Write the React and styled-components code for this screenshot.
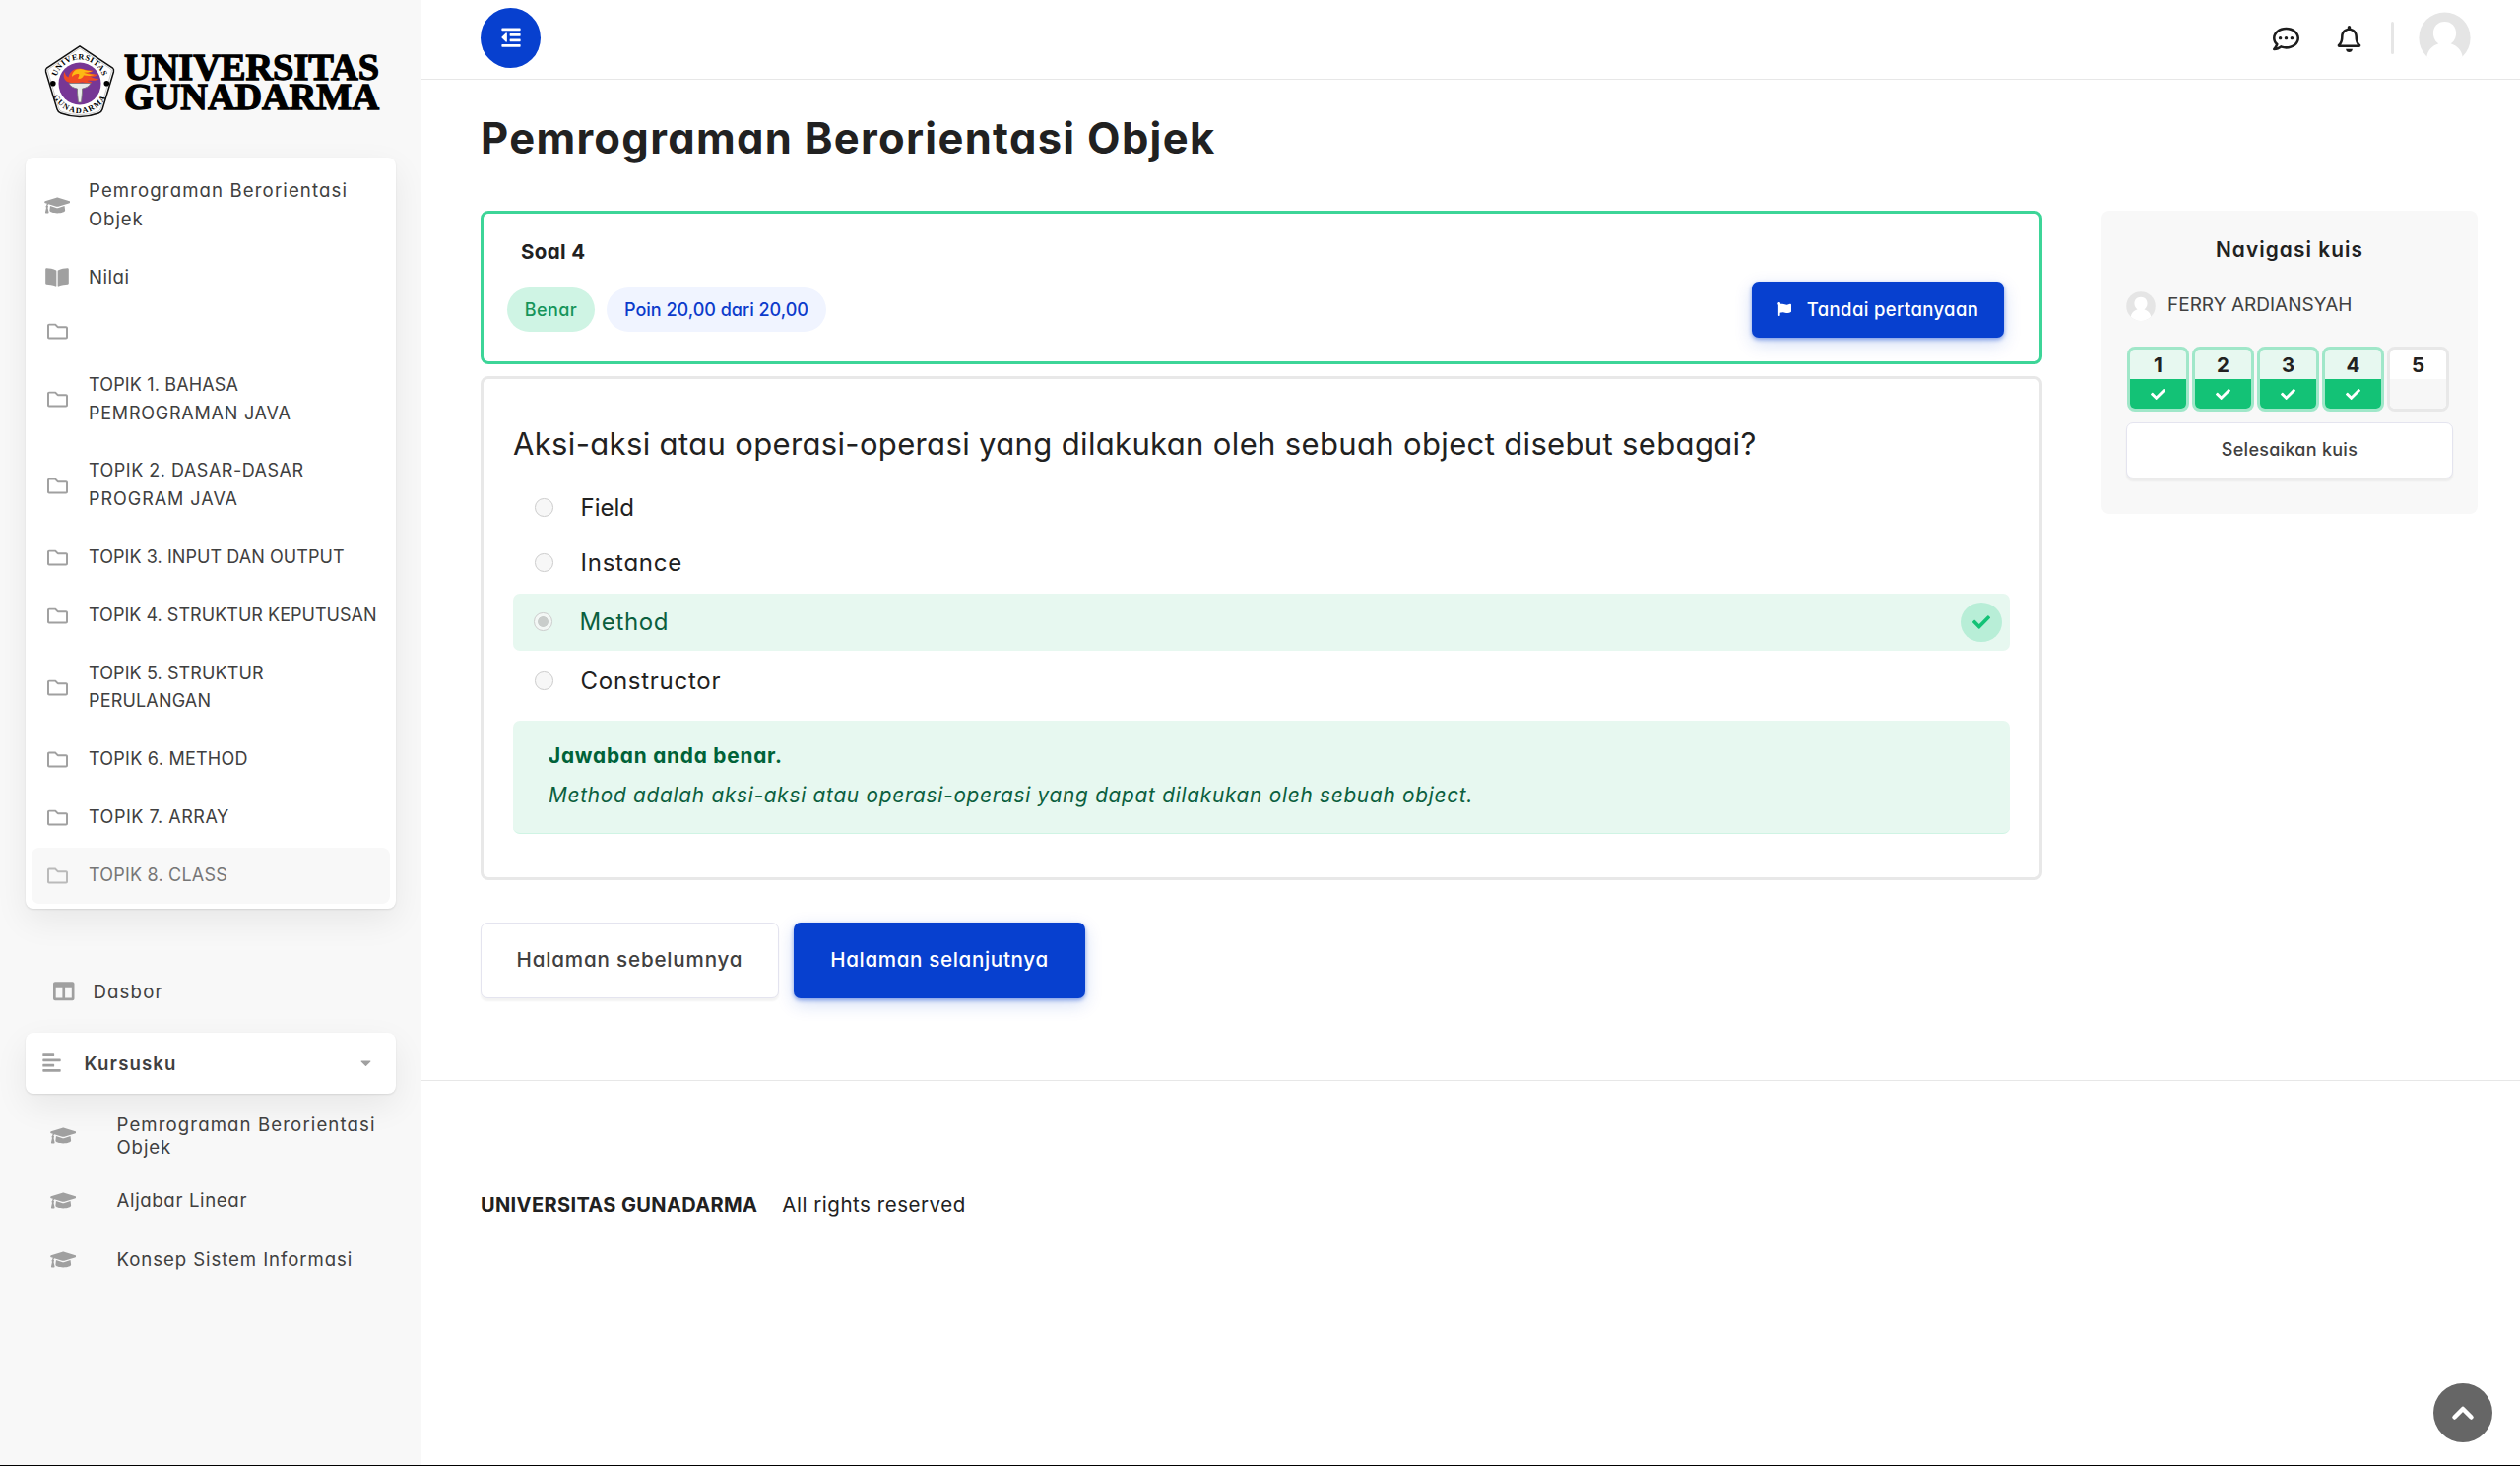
import React from "react";
import styled, { createGlobalStyle, css } from "styled-components";
import {
  FaGraduationCap, FaBookOpen, FaRegFolder, FaColumns, FaAlignLeft, FaCaretDown,
  FaOutdent, FaRegCommentDots, FaRegBell, FaFlag, FaCheck,
} from "react-icons/fa";

const Global = createGlobalStyle`
  * { box-sizing: border-box; }
  body {
    margin: 0;
    background: #fff;
    color: #212121;
    font-family: Inter, "Open Sans", sans-serif;
    font-feature-settings: "cv11";
  }
  svg { display: block; flex: none; }
`;

const floating = css`
  box-shadow: 0 1px 2px rgba(0, 0, 0, 0.1), 0 12px 34px rgba(0, 0, 0, 0.07);
`;

const Label = styled.span`
  white-space: nowrap;
  letter-spacing: ${p => p.$ls || 0}px;
`;

const Page = styled.div`
  display: flex;
  height: 1489px;
  border-bottom: 1px solid #000;
  overflow: hidden;
`;

/* Sidebar */
const Sidebar = styled.aside`
  width: 428px;
  flex: none;
  background: #f8f8f8;
  padding: 46px 26px 0;
`;
const LogoLink = styled.div`
  padding-left: 20px;
  height: 114px;
  svg { overflow: visible; }
`;
const MenuCard = styled.nav`
  background: #fff;
  border-radius: 8px;
  padding: 5.4px 6px;
  height: 763px;
  display: flex;
  flex-direction: column;
  gap: 2px;
  ${floating}
`;
const MenuItem = styled.div`
  display: flex;
  align-items: center;
  border-radius: 8px;
  padding: 14px 0;
  min-height: 48.6px;
  font-size: ${p => (p.$caps ? 18 : 18.6)}px;
  line-height: 28.8px;
  color: #404040;
  background: ${p => (p.$active ? "#f8f8f8" : "transparent")};
  > * { opacity: ${p => (p.$active ? 0.7 : 1)}; }
`;
const IconCell = styled.span`
  width: 52px;
  margin-right: ${p => p.$gap ?? 6}px;
  flex: none;
  display: flex;
  justify-content: center;
  color: #a0a0a0;
`;
const Lines = styled.span`
  display: flex;
  flex-direction: column;
  align-items: flex-start;
`;
const DashLink = styled.div`
  display: flex;
  align-items: center;
  gap: 19px;
  height: 50px;
  margin-top: 59px;
  padding-left: 28px;
  color: #404040;
  font-size: 18.6px;
  svg { color: #a0a0a0; }
`;
const Courses = styled.div`
  display: flex;
  align-items: center;
  gap: 23.5px;
  height: 62px;
  margin-top: 17px;
  padding: 0 22px 1px 17px;
  background: #fff;
  border-radius: 8px;
  font-weight: 600;
  font-size: 18.6px;
  color: #404040;
  ${floating}
  svg { color: #a0a0a0; }
  svg:last-child { margin-left: auto; }
`;
const SubList = styled.div`
  padding-top: 6.5px;
`;
const SubItem = styled.div`
  display: flex;
  align-items: center;
  height: ${p => (p.$tall ? 72 : 60)}px;
  padding-left: 12px;
  font-size: 18.6px;
  line-height: 22.8px;
  color: #404040;
`;

/* Main area */
const Main = styled.main`
  flex: 1;
  min-width: 0;
`;
const TopBar = styled.header`
  height: 81px;
  border-bottom: 1px solid #e7e7e7;
  display: flex;
  align-items: center;
  padding: 0 50px 4px 60px;
  color: #1d1d1d;
`;
const Toggle = styled.button`
  width: 61px;
  height: 61px;
  border: 0;
  border-radius: 50%;
  background: #0740cf;
  color: #fff;
  display: flex;
  align-items: center;
  justify-content: center;
  margin-right: auto;
`;
const Tools = styled.div`
  display: flex;
  align-items: center;
  gap: 37px;
  padding-top: 3px;
`;
const Divider = styled.i`
  width: 3px;
  height: 33px;
  border-radius: 2px;
  background: #e6e6e6;
  margin: 0 25px 0 29.5px;
`;
const Title = styled.h1`
  margin: 28px 0 42px 60px;
  font-size: 43.5px;
  line-height: 63px;
  font-weight: 700;
`;
const Content = styled.div`
  display: grid;
  grid-template-columns: 1586px 382px;
  column-gap: 60px;
  padding-left: 60px;
  align-items: start;
  height: 884px;
  border-bottom: 1px solid #e7e7e7;
`;
const InfoCard = styled.section`
  height: 156px;
  border: 3px solid #3dd598;
  border-radius: 8px;
  padding: 24px 36px 24px 24px;
`;
const QuestionNo = styled.h3`
  margin: 0 0 15.4px 14px;
  font-size: 20.5px;
  line-height: 30px;
  font-weight: 700;
`;
const InfoRow = styled.div`
  display: flex;
  align-items: center;
  gap: 12px;
  > button { margin-left: auto; }
`;
const Badge = styled.span`
  height: 45px;
  width: ${p => (p.$ok ? 89 : 223)}px;
  border-radius: 23px;
  display: flex;
  align-items: center;
  justify-content: center;
  font-size: 18px;
  font-weight: 500;
  background: ${p => (p.$ok ? "#cff4e4" : "#f0f4ff")};
  color: ${p => (p.$ok ? "#16945a" : "#0c3bcb")};
`;
const Button = styled.button`
  font-family: inherit;
  font-feature-settings: inherit;
  font-weight: 500;
  font-size: ${p => p.$fs}px;
  width: ${p => p.$w}px;
  height: ${p => p.$h}px;
  padding: 0 0 1.5px;
  border-radius: 7px;
  display: flex;
  align-items: center;
  justify-content: center;
  gap: 16px;
  ${p => p.$primary
    ? css`
        background: #0740cf;
        color: #fff;
        border: 0;
        box-shadow: 0 2px 4px rgba(7, 64, 207, 0.45), 0 6px 18px rgba(7, 64, 207, 0.18);
      `
    : css`
        background: #fff;
        color: #404040;
        border: 1px solid #e4e4ef;
        box-shadow: 0 3px 2px rgba(0, 0, 0, 0.05);
      `}
`;
const QuestionCard = styled.section`
  margin-top: 12px;
  height: 512px;
  border: 3px solid #e8e8e8;
  border-radius: 8px;
  padding: 42.5px 30px 0;
`;
const Question = styled.p`
  margin: 0 0 15px;
  font-size: 31px;
  line-height: 45px;
`;
const Option = styled.label`
  display: flex;
  align-items: center;
  gap: 28px;
  height: 56px;
  padding-left: 22px;
  font-size: 24px;
  ${p => p.$ok && css`
    height: 58px;
    margin: 3px 0;
    padding: 0 8px 0 21px;
    border-radius: 7px;
    background: #e7f8f0;
    color: #0b5f3e;
  `}
`;
const Radio = styled.i`
  width: 18.5px;
  height: 18.5px;
  border-radius: 50%;
  border: 1.5px solid #cdcdcd;
  background: ${p => (p.$on ? "radial-gradient(circle, #c9cdcb 0 5px, #f3f7f5 5.8px)" : "#f7f7f7")};
`;
const Mark = styled.span`
  margin-left: auto;
  width: 42px;
  height: 40px;
  border-radius: 50%;
  background: #b8eed7;
  color: #13c276;
  display: flex;
  align-items: center;
  justify-content: center;
`;
const Feedback = styled.div`
  margin-top: 12.5px;
  height: 115px;
  padding: 16.4px 36px;
  background: #e7f8f0;
  border-radius: 7px;
  border-bottom: 1.5px solid #cff4e4;
  color: #0b5f3e;
  font-size: 20.8px;
  line-height: 40px;
  strong { display: block; font-weight: 700; color: #006238; }
  em { display: block; }
`;
const Pager = styled.div`
  display: flex;
  gap: 15px;
  margin-top: 43px;
`;

/* Quiz navigation */
const Panel = styled.aside`
  height: 308px;
  background: #f8f8f8;
  border-radius: 8px;
  padding: 25px 25px 0;
`;
const PanelTitle = styled.h2`
  margin: 0;
  text-align: center;
  font-size: 20.8px;
  line-height: 30px;
  font-weight: 600;
`;
const User = styled.div`
  display: flex;
  align-items: center;
  gap: 12px;
  height: 30px;
  margin-top: 27px;
  font-size: 19px;
  color: #404040;
  span { padding-bottom: 3px; }
`;
const Cells = styled.div`
  display: flex;
  gap: 3px;
  padding-left: 1px;
  margin: 26px 0 11px;
`;
const Cell = styled.div`
  width: 63px;
  height: 66px;
  border-radius: 8px;
  border: 3px solid ${p => (p.$ok ? "#a0e7c9" : "#e8e8e8")};
  background: ${p => (p.$ok ? "#e7f8f0" : "#fff")};
  display: grid;
  grid-template-rows: 30px 30px;
  overflow: hidden;
  text-align: center;
  font-size: 20.5px;
  font-weight: 700;
  line-height: 32px;
`;
const CellState = styled.span`
  display: flex;
  align-items: center;
  justify-content: center;
  color: #fff;
  background: ${p => (p.$ok ? "#13c276" : "#f7f7f7")};
`;

const Footer = styled.footer`
  display: flex;
  gap: 25px;
  padding: 110.5px 0 0 60px;
  font-size: 20.5px;
  line-height: 30px;
  strong { font-weight: 700; font-size: 20px; }
`;
const ToTop = styled.button`
  position: absolute;
  left: 2471px;
  top: 1405px;
  width: 60px;
  height: 60px;
  border: 0;
  border-radius: 50%;
  background: #666;
  display: flex;
  align-items: center;
  justify-content: center;
  padding: 0;
`;

const Avatar = ({ size }) => (
  <svg width={size} height={size} viewBox="0 0 54 54">
    <circle cx="27" cy="27" r="26.6" fill="#e5e5e5" />
    <path d="M27 10.3c-7 0-11.8 5-11.8 11.8 0 4.8 2.3 8.8 5.6 10.8C14 35 9.5 40 8.500 46.500A26.600 26.600 0 0 0 27 54a26.600 26.600 0 0 0 18.500-7.500C44.500 40 40 35 33.200 32.900c3.300-2 5.600-6 5.600-10.800 0-6.800-4.800-11.800-11.800-11.800z" fill="#fff" />
  </svg>
);

const Logo = () => (
  <svg width="340" height="74" viewBox="0 0 340 74">
    <defs>
      <path id="arcTop" d="M10.5 39A24.500 24.500 0 0 1 59.500 39" />
      <path id="arcBottom" d="M5 39A30 30 0 0 0 65 39" />
    </defs>
    <path d="M35 .8 68.500 23Q70 24.200 69.400 27L58 65Q57.200 67.800 54 69 35 76 16 69 12.800 67.800 12 65L.6 27Q0 24.200 1.500 23Z" fill="#fff" stroke="#111" strokeWidth="1.500" />
    <path d="M35 3 66.500 24Q67.800 25 67.200 27L56.500 63.500Q55.700 66.500 53 67.500 35 73.500 17 67.500 14.300 66.500 13.500 63.500L2.800 27Q2.200 25 3.500 24Z" fill="none" stroke="#999" strokeWidth=".5" />
    <circle cx="35" cy="39" r="21.5" fill="#773795" />
    <circle cx="7.800" cy="38.800" r="2.800" />
    <circle cx="62.300" cy="38.800" r="2.800" />
    <g fontFamily="Liberation Serif, serif" fontWeight="700" fontSize="8.200" textAnchor="middle">
      <text letterSpacing=".6"><textPath href="#arcTop" startOffset="50%">UNIVERSITAS</textPath></text>
      <text letterSpacing="1.3"><textPath href="#arcBottom" startOffset="50%">GUNADARMA</textPath></text>
    </g>
    <path d="M19.500 27c1 3 2 5 4 5.500 1-5 5-9.500 12-9 4 .3 7 2.500 13 2-1 2-3 2-5 2 3 2 7 2 10 2-2 2.500-5 2.500-8 2 3 2 6 2.500 9 2.500-4 3-8 1-12 2 2 .6 4 .8 5 2-4 1.500-7-.5-10-.5-5 .8-13 1.500-16-1-3-2.500-3.500-6-2-9.500z" fill="#f04a23" />
    <path d="M27 32c0-5 4-8.500 9-8 4 .4 6 2.500 11 2-2 2-6 1.300-8 1.800 3 1.200 7 2.200 11 2-4 2-8 .6-11 .8-1 3-4 4-6 3 1-2 2-3 1-4.500-3-.6-5 .9-7 2.900z" fill="#fdb813" />
    <path d="M24 38.500h22c-1 3-5 5-8.500 5.500v4l-1 10h-3l-1-10v-4c-3.500-.5-7.500-2.500-8.500-5.500z" fill="#e9e9e9" stroke="#777" strokeWidth=".8" />
    <g fontFamily="Liberation Serif, serif" fontWeight="700" fontSize="38.500" stroke="#000" strokeWidth="1.300">
      <text x="80" y="34.500" textLength="259" lengthAdjust="spacingAndGlyphs">UNIVERSITAS</text>
      <text x="80" y="64.500" textLength="259" lengthAdjust="spacingAndGlyphs">GUNADARMA</text>
    </g>
  </svg>
);

const cap = <FaGraduationCap style={{ width: 26.5, height: 21 }} />;
const folder = <FaRegFolder size={21} />;

const menu = [
  { icon: cap, lines: [["Pemrograman Berorientasi", 1.12], ["Objek", 0.9]] },
  { icon: <FaBookOpen style={{ width: 24, height: 21 }} />, lines: [["Nilai", 0.5]] },
  { icon: folder, lines: [] },
  { icon: folder, caps: true, lines: [["TOPIK 1. BAHASA", 0.15], ["PEMROGRAMAN JAVA", 0.77]] },
  { icon: folder, caps: true, lines: [["TOPIK 2. DASAR-DASAR", 0.5], ["PROGRAM JAVA", 0.97]] },
  { icon: folder, caps: true, lines: [["TOPIK 3. INPUT DAN OUTPUT", 0.07]] },
  { icon: folder, caps: true, lines: [["TOPIK 4. STRUKTUR KEPUTUSAN", 0.03]] },
  { icon: folder, caps: true, lines: [["TOPIK 5. STRUKTUR", 0.1], ["PERULANGAN", 0.17]] },
  { icon: folder, caps: true, lines: [["TOPIK 6. METHOD", 0.25]] },
  { icon: folder, caps: true, lines: [["TOPIK 7. ARRAY", 0.53]] },
  { icon: folder, caps: true, active: true, lines: [["TOPIK 8. CLASS", 0.2]] },
];

const courses = [
  { tall: true, lines: [["Pemrograman Berorientasi", 1.12], ["Objek", 0.9]] },
  { lines: [["Aljabar Linear", 0.65]] },
  { lines: [["Konsep Sistem Informasi", 0.93]] },
];

const TextLines = ({ lines }) => (
  <Lines>{lines.map(([text, ls]) => <Label key={text} $ls={ls}>{text}</Label>)}</Lines>
);

export default function App() {
  return (
    <Page>
      <Global />
      <Sidebar>
        <LogoLink><Logo /></LogoLink>
        <MenuCard>
          {menu.map((item, i) => (
            <MenuItem key={i} $caps={item.caps} $active={item.active}>
              <IconCell>{item.icon}</IconCell>
              <TextLines lines={item.lines} />
            </MenuItem>
          ))}
        </MenuCard>
        <DashLink><FaColumns size={21.5} /><Label $ls={1.16}>Dasbor</Label></DashLink>
        <Courses>
          <FaAlignLeft style={{ width: 19, height: 21 }} />
          <Label $ls={1.14}>Kursusku</Label>
          <FaCaretDown size={17} />
        </Courses>
        <SubList>
          {courses.map(course => (
            <SubItem key={course.lines[0][0]} $tall={course.tall}>
              <IconCell $gap={28.5}>{cap}</IconCell>
              <TextLines lines={course.lines} />
            </SubItem>
          ))}
        </SubList>
      </Sidebar>

      <Main>
        <TopBar>
          <Toggle><FaOutdent size={22} /></Toggle>
          <Tools>
            <FaRegCommentDots size={27} />
            <FaRegBell size={27} />
          </Tools>
          <Divider />
          <Avatar size={53} />
        </TopBar>
        <Title><Label $ls={1.32}>Pemrograman Berorientasi Objek</Label></Title>
        <Content>
          <div>
            <InfoCard>
              <QuestionNo><Label $ls={0.36}>Soal 4</Label></QuestionNo>
              <InfoRow>
                <Badge $ok><Label $ls={0.4}>Benar</Label></Badge>
                <Badge><Label>Poin 20,00 dari 20,00</Label></Badge>
                <Button $primary $w={256} $h={57} $fs={18.5}>
                  <FaFlag size={14} />
                  <Label $ls={0.37}>Tandai pertanyaan</Label>
                </Button>
              </InfoRow>
            </InfoCard>
            <QuestionCard>
              <Question>
                <Label $ls={0.35}>Aksi-aksi atau operasi-operasi yang dilakukan oleh sebuah object disebut sebagai?</Label>
              </Question>
              <Option><Radio /><Label>Field</Label></Option>
              <Option><Radio /><Label $ls={0.75}>Instance</Label></Option>
              <Option $ok>
                <Radio $on />
                <Label $ls={0.64}>Method</Label>
                <Mark><FaCheck size={18} /></Mark>
              </Option>
              <Option><Radio /><Label $ls={0.74}>Constructor</Label></Option>
              <Feedback>
                <strong><Label $ls={0.79}>Jawaban anda benar.</Label></strong>
                <em><Label $ls={0.73}>Method adalah aksi-aksi atau operasi-operasi yang dapat dilakukan oleh sebuah object.</Label></em>
              </Feedback>
            </QuestionCard>
            <Pager>
              <Button $w={303} $h={77} $fs={20.6}><Label $ls={0.82}>Halaman sebelumnya</Label></Button>
              <Button $primary $w={296} $h={77} $fs={20.6}><Label $ls={0.65}>Halaman selanjutnya</Label></Button>
            </Pager>
          </div>
          <Panel>
            <PanelTitle><Label $ls={1.08}>Navigasi kuis</Label></PanelTitle>
            <User><Avatar size={30} /><Label>FERRY ARDIANSYAH</Label></User>
            <Cells>
              {[1, 2, 3, 4, 5].map(n => (
                <Cell key={n} $ok={n < 5}>
                  <span>{n}</span>
                  <CellState $ok={n < 5}>{n < 5 && <FaCheck size={15} />}</CellState>
                </Cell>
              ))}
            </Cells>
            <Button $w={332} $h={57} $fs={18}><Label $ls={0.27}>Selesaikan kuis</Label></Button>
          </Panel>
        </Content>
        <Footer>
          <strong><Label $ls={0.37}>UNIVERSITAS GUNADARMA</Label></strong>
          <Label $ls={0.53}>All rights reserved</Label>
        </Footer>
      </Main>

      <ToTop>
        <svg width="24" height="16" viewBox="0 0 24 16">
          <path d="M3.500 12.500 12 4l8.500 8.500" fill="none" stroke="#fff" strokeWidth="4.500" strokeLinecap="round" strokeLinejoin="round" />
        </svg>
      </ToTop>
    </Page>
  );
}
